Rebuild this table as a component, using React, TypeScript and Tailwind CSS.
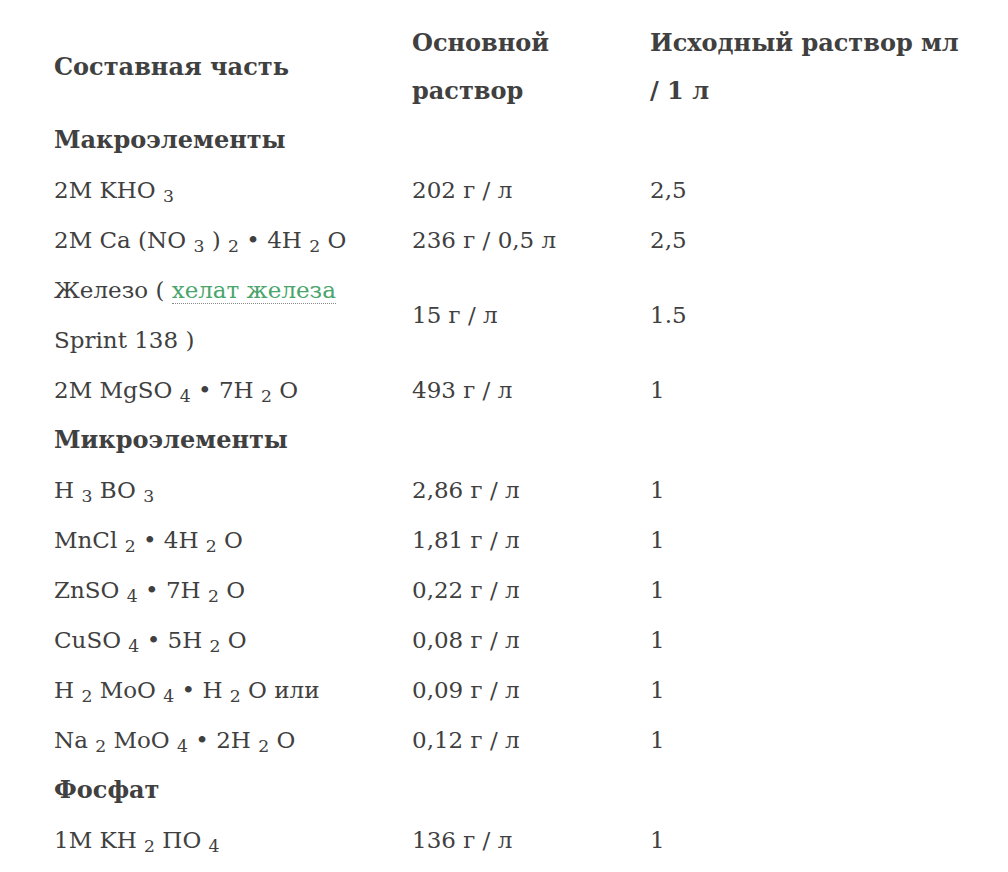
type Row =
  | { kind: "section"; label: string }
  | { kind: "row"; name: React.ReactNode; stock: string; dose: string };

const rows: Row[] = [
  { kind: "section", label: "Макроэлементы" },
  { kind: "row", name: <>2M KHO <sub>3</sub></>, stock: "202 г / л", dose: "2,5" },
  {
    kind: "row",
    name: <>2M Ca (NO <sub>3</sub> ) <sub>2</sub> • 4H <sub>2</sub> O</>,
    stock: "236 г / 0,5 л",
    dose: "2,5",
  },
  {
    kind: "row",
    name: (
      <>
        Железо ({" "}
        <a href="#" className="border-b border-dotted border-[#8a8a8a] text-[#4aa56c]">
          хелат железа
        </a>
        <br />
        Sprint 138 )
      </>
    ),
    stock: "15 г / л",
    dose: "1.5",
  },
  { kind: "row", name: <>2M MgSO <sub>4</sub> • 7H <sub>2</sub> O</>, stock: "493 г / л", dose: "1" },
  { kind: "section", label: "Микроэлементы" },
  { kind: "row", name: <>H <sub>3</sub> BO <sub>3</sub></>, stock: "2,86 г / л", dose: "1" },
  { kind: "row", name: <>MnCl <sub>2</sub> • 4H <sub>2</sub> O</>, stock: "1,81 г / л", dose: "1" },
  { kind: "row", name: <>ZnSO <sub>4</sub> • 7H <sub>2</sub> O</>, stock: "0,22 г / л", dose: "1" },
  { kind: "row", name: <>CuSO <sub>4</sub> • 5H <sub>2</sub> O</>, stock: "0,08 г / л", dose: "1" },
  {
    kind: "row",
    name: <>H <sub>2</sub> MoO <sub>4</sub> • H <sub>2</sub> O или</>,
    stock: "0,09 г / л",
    dose: "1",
  },
  {
    kind: "row",
    name: <>Na <sub>2</sub> MoO <sub>4</sub> • 2H <sub>2</sub> O</>,
    stock: "0,12 г / л",
    dose: "1",
  },
  { kind: "section", label: "Фосфат" },
  { kind: "row", name: <>1M KH <sub>2</sub> ПО <sub>4</sub></>, stock: "136 г / л", dose: "1" },
];

export default function App() {
  return (
    <div className="min-h-[872px] bg-white pl-[54px] pt-[19px] font-['DejaVu_Serif',serif] text-[23px] text-[#404040]">
      <table className="w-[930px] table-fixed border-collapse text-left">
        <colgroup>
          <col className="w-[358px]" />
          <col className="w-[238px]" />
          <col className="w-[334px]" />
        </colgroup>
        <thead>
          <tr className="align-middle text-[24px] font-bold leading-[48px]">
            <th className="p-0 font-bold">Составная часть</th>
            <th className="p-0 font-bold">
              Основной
              <br />
              раствор
            </th>
            <th className="p-0 font-bold whitespace-nowrap">
              Исходный раствор мл
              <br />/ 1 л
            </th>
          </tr>
        </thead>
        <tbody className="leading-[50px]">
          {rows.map((r, i) =>
            r.kind === "section" ? (
              <tr key={i}>
                <td colSpan={3} className="p-0 text-[24px] font-bold">
                  {r.label}
                </td>
              </tr>
            ) : (
              <tr key={i} className="align-middle">
                <td className="p-0 whitespace-nowrap">{r.name}</td>
                <td className="p-0 whitespace-nowrap">{r.stock}</td>
                <td className="p-0">{r.dose}</td>
              </tr>
            )
          )}
        </tbody>
      </table>
    </div>
  );
}
